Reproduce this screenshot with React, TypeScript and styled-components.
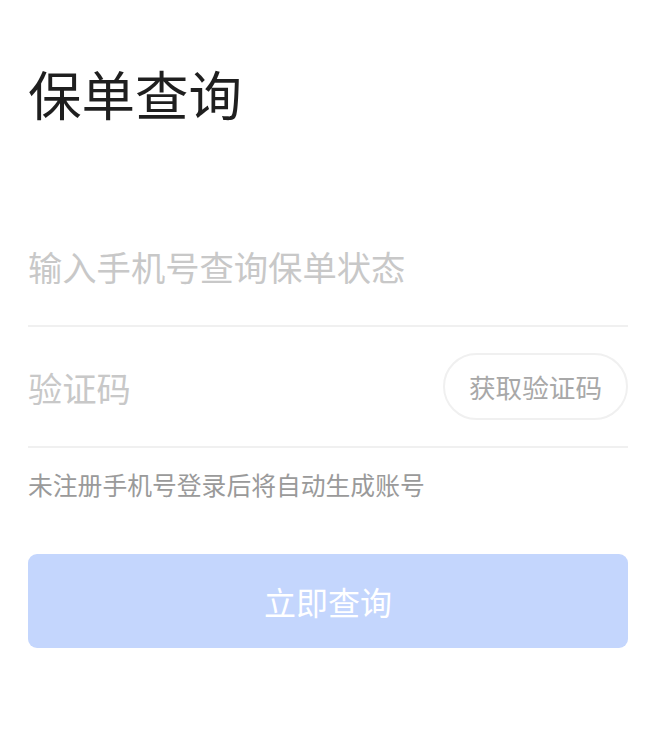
import styled, { createGlobalStyle } from 'styled-components';

const GlobalStyle = createGlobalStyle`
  * {
    box-sizing: border-box;
  }
  body {
    margin: 0;
    background: #fff;
    font-family: 'Noto Sans CJK SC', 'Noto Sans', sans-serif;
  }
`;

const Page = styled.div`
  padding: 0 29px 0 28px;
`;

const Title = styled.h1`
  margin: 0;
  padding-top: 61px;
  height: 206px;
  font-size: 53.5px;
  line-height: 64px;
  font-weight: 400;
  color: #1f1f1f;
`;

const Row = styled.div`
  display: flex;
  align-items: center;
  height: 121px;
  border-bottom: 2px solid #f0f0f0;
`;

const Field = styled.input`
  flex: 1;
  min-width: 0;
  border: none;
  outline: none;
  padding: 0;
  background: transparent;
  font-family: inherit;
  font-size: 34.3px;
  color: #333;

  &::placeholder {
    color: #c8c8c8;
  }
`;

const CodeButton = styled.button`
  flex-shrink: 0;
  height: 67px;
  padding: 0 24px;
  border: 2px solid #f0f0f0;
  border-radius: 34px;
  background: #fff;
  font-family: inherit;
  font-size: 26.6px;
  color: #a8a8a8;
`;

const Hint = styled.p`
  margin: 19px 0 0;
  font-size: 24.8px;
  line-height: 34px;
  color: #9a9a9a;
`;

const Submit = styled.button`
  display: block;
  width: 100%;
  height: 94px;
  margin-top: 53px;
  border: none;
  border-radius: 9px;
  background: #c4d6fd;
  font-family: inherit;
  font-size: 32px;
  color: #fff;
`;

export default function App() {
  return (
    <Page>
      <GlobalStyle />
      <Title>保单查询</Title>
      <Row>
        <Field placeholder='输入手机号查询保单状态' />
      </Row>
      <Row>
        <Field placeholder='验证码' />
        <CodeButton>获取验证码</CodeButton>
      </Row>
      <Hint>未注册手机号登录后将自动生成账号</Hint>
      <Submit disabled>立即查询</Submit>
    </Page>
  );
}
